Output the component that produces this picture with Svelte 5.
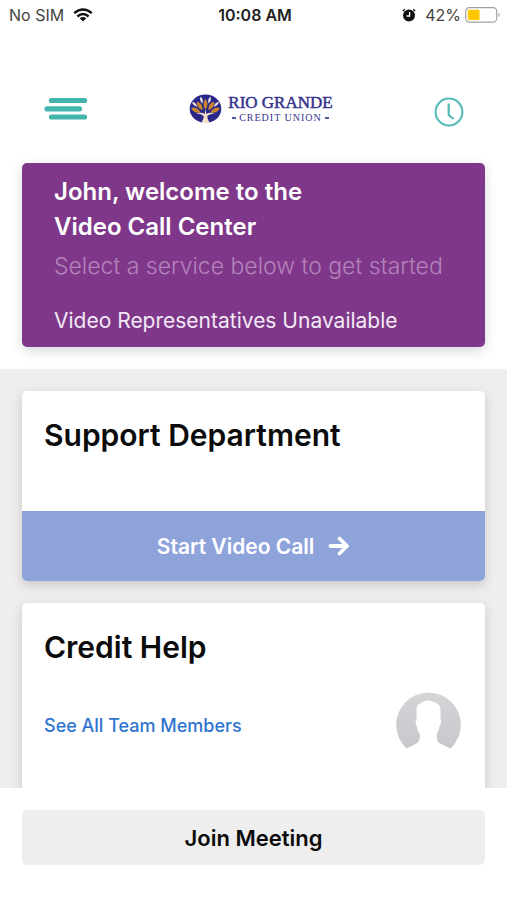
<script>
  const member = 'John';
  const battery = 42;
  const leaves = [-64, -32, 0, 32, 64];
  const buds = [-48, -16, 16, 48];
</script>

<div class="app">
  <div class="status">
    <div class="carrier">
      <span>No SIM</span>
      <svg width="20" height="14" viewBox="0 0 20 14" aria-hidden="true">
        <g fill="none" stroke="#111" stroke-width="2.4">
          <path d="M1.2 5.2Q10-2.4 18.8 5.2" />
          <path d="M4.4 8.5Q10 3.6 15.6 8.5" />
        </g>
        <path d="M6.7 10.3Q10 7.8 13.3 10.3L10 13.6Z" fill="#111" />
      </svg>
    </div>
    <time>10:08 AM</time>
    <div class="power">
      <svg width="14" height="14" viewBox="0 0 14 14" aria-hidden="true">
        <path d="M.8 3L2.8 1.2M13.2 3L11.2 1.2" stroke="#111" stroke-width="1.2" />
        <circle cx="7" cy="7.4" r="6" fill="#111" />
        <path d="M7.6 4V8H4.6" fill="none" stroke="#fff" stroke-width="1.3" />
      </svg>
      <span>{battery}%</span>
      <svg class="battery" width="36" height="16" viewBox="0 0 36 16" aria-hidden="true">
        <rect x=".7" y=".7" width="31" height="14.4" rx="3.6" fill="#fff" stroke="#a3a3a3" stroke-width="1.2" />
        <rect x="2.8" y="2.8" width={battery * 0.28} height="10.2" rx="1" fill="#ffc700" />
        <path d="M33.5 5.5Q36 8 33.5 10.3Z" fill="#a3a3a3" />
      </svg>
    </div>
  </div>

  <header>
    <button class="icon" aria-label="Menu">
      <svg width="44" height="24" viewBox="0 0 44 24">
        <path d="M7.5 3.5H40.5M3 11.8H35.5M7.5 20H40.5" stroke="#43b5ad" stroke-width="5.2" stroke-linecap="round" />
      </svg>
    </button>
    <div class="logo">
      <svg width="33" height="30" viewBox="0 0 33 30" aria-hidden="true">
        <ellipse cx="16.5" cy="14.8" rx="15.8" ry="14.2" fill="#29288a" />
        {#each buds as angle}
          <path d="M16.5 2Q19 5 16.5 9Q14 5 16.5 2Z" fill="#eee2dc" transform="rotate({angle} 16.5 20)" />
        {/each}
        {#each leaves as angle}
          <path d="M16.5 5Q20.6 9.5 16.5 15.5Q12.4 9.5 16.5 5Z" fill="#c9862f" transform="rotate({angle} 16.5 21)" />
        {/each}
        <path d="M12 29Q15 25 14.6 22Q12 19.4 7 19.4Q12.6 17.6 15.6 20L16.5 15L17.4 20Q20.4 17.6 26 19.4Q21 19.4 18.4 22Q18 25 21 29Z" fill="#f3dfc6" />
      </svg>
      <div class="wordmark">
        <span class="name">RIO GRANDE</span>
        <span class="kind">CREDIT UNION</span>
      </div>
    </div>
    <button class="icon history" aria-label="History">
      <svg width="30" height="30" viewBox="0 0 30 30" fill="none" stroke="#52bbb3">
        <circle cx="15" cy="15" r="13.4" stroke-width="2" />
        <path d="M14.7 6.5V18L19.6 22" stroke-width="2.2" />
      </svg>
    </button>
  </header>

  <section class="hero">
    <h1>{member}, welcome to the<br />Video Call Center</h1>
    <p class="hint">Select a service below to get started</p>
    <p class="state">Video Representatives Unavailable</p>
  </section>

  <main>
    <article>
      <h2>Support Department</h2>
      <button class="start">
        Start Video Call
        <svg width="22" height="20" viewBox="0 0 22 20" fill="none" stroke="#fff" stroke-width="3.8" stroke-linecap="round" stroke-linejoin="round" aria-hidden="true">
          <path d="M2.5 10H19M11.5 2.5L19 10L11.5 17.5" />
        </svg>
      </button>
    </article>
    <article class="team">
      <h2>Credit Help</h2>
      <div class="members">
        <a href="#team">See All Team Members</a>
        <svg width="66" height="66" viewBox="0 0 66 66" aria-hidden="true">
          <defs>
            <linearGradient id="shade" x1="0" y1="0" x2="0" y2="1">
              <stop offset="0" stop-color="#d5d5d8" />
              <stop offset="1" stop-color="#c7c7cc" />
            </linearGradient>
          </defs>
          <path d="M11.5 56.5A32.3 32.3 0 1 1 55.5 56.5L45 51.5Q41.8 49.5 41.8 46V42Q43.8 38.5 44.5 34.5Q47 31 45.5 27V17Q45 12.5 41 11Q33 6 25.5 11Q21.5 13 21.5 18V27Q19.5 31 21.8 34.5Q22.6 39 24.8 42V46Q24.6 49.5 21.5 51.5Z" fill="url(#shade)" />
        </svg>
      </div>
    </article>
  </main>

  <footer>
    <button class="join">Join Meeting</button>
  </footer>
</div>

<style>
  :global(body) { margin: 0; background: #fff; }
  .app {
    display: flex;
    flex-direction: column;
    height: 100vh;
    font-family: Inter, "Open Sans", sans-serif;
    color: #0b0b0b;
  }
  button { border: 0; padding: 0; font: inherit; color: inherit; cursor: pointer; }
  svg { display: block; }
  h1, h2, p { margin: 0; }
  .status {
    display: grid;
    grid-template-columns: 1fr auto 1fr;
    align-items: center;
    flex: none;
    height: 30px;
    padding: 0 6px 0 9px;
    font-size: 16px;
    color: #444;
  }
  .carrier, .power { display: flex; align-items: center; gap: 9px; }
  .power { justify-content: flex-end; }
  .power .battery { margin-left: -5px; }
  time { color: #222; font-weight: 600; }
  header {
    display: flex;
    align-items: center;
    justify-content: space-between;
    flex: none;
    height: 72px;
    margin-top: 43px;
    padding: 0 43px 0 44px;
  }
  .icon { background: none; }
  .history { padding-top: 6px; }
  .logo { display: flex; align-items: center; gap: 6px; }
  .wordmark {
    display: flex;
    flex-direction: column;
    align-items: center;
    font-family: "Liberation Serif", serif;
    color: #35338e;
  }
  .name { font-size: 17px; line-height: 18px; -webkit-text-stroke: 0.5px #35338e; }
  .kind { display: flex; align-items: center; gap: 3px; font-size: 10px; line-height: 12px; letter-spacing: 1px; }
  .kind::before, .kind::after { content: ""; width: 4px; height: 2px; background: #5553a0; }
  .hero {
    flex: none;
    margin: 18px 22px 22px;
    padding: 11px 32px 8px;
    border-radius: 5px;
    background: #7f3889;
    color: #fff;
    box-shadow: 0 4px 12px rgba(0, 20, 30, 0.16);
  }
  h1 { font-size: 24px; line-height: 35px; font-weight: 600; }
  .hint { font-size: 23px; line-height: 44px; font-weight: 300; color: #b482bb; white-space: nowrap; }
  .state { padding-top: 15px; font-size: 21px; line-height: 36px; font-weight: 400; color: #f3e8f5; white-space: nowrap; }
  main {
    display: flex;
    flex: 1;
    flex-direction: column;
    gap: 22px;
    min-height: 0;
    overflow: hidden;
    padding: 22px 22px 0;
    background: #efeded;
  }
  article {
    flex: none;
    border-radius: 5px;
    background: #fff;
    box-shadow: 0 4px 12px rgba(0, 0, 0, 0.16);
  }
  h2 { padding: 24px 22px 0; font-size: 30px; line-height: 40px; font-weight: 600; }
  .start {
    display: flex;
    align-items: center;
    justify-content: center;
    gap: 14px;
    width: 100%;
    height: 70px;
    margin-top: 56px;
    border-radius: 0 0 5px 5px;
    background: #8fa3db;
    color: #fff;
    font-size: 21px;
    font-weight: 600;
  }
  .team { min-height: 220px; }
  .members { display: flex; align-items: center; justify-content: space-between; padding: 25px 24px 0 22px; }
  a { color: #2f74d0; font-size: 18px; font-weight: 500; text-decoration: none; }
  footer { flex: none; padding: 22px 22px 35px; background: #fff; }
  .join {
    width: 100%;
    height: 55px;
    border-radius: 5px;
    background: #eee;
    font-size: 22px;
    font-weight: 600;
  }
</style>
